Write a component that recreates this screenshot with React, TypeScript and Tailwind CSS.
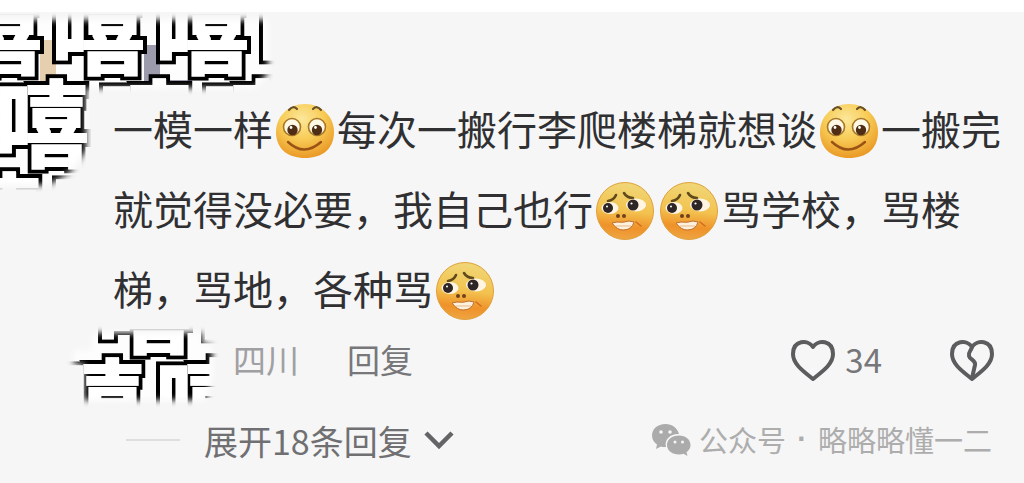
import { useId } from 'react'

const rows = [
  { y: 31, xs: [-5, 98, 202, 305] },
  { y: 124, xs: [42, 145, 248] },
  { y: 217, xs: [-5, 98] },
  { y: 310, xs: [144, 247] },
  { y: 403, xs: [98, 202] },
]

function Stickers() {
  const id = useId()
  const glyphs = rows.flatMap((row) => row.xs.map((x) => ({ x, y: row.y })))

  return (
    <svg
      className="pointer-events-none absolute left-0 top-0 h-[420px] w-[340px] font-['Noto_Sans_CJK_SC',sans-serif] text-[94px] font-bold"
      viewBox="0 0 340 420"
      aria-hidden="true"
    >
      <defs>
        <filter id={`${id}-soft`} x="-20%" y="-20%" width="140%" height="140%">
          <feGaussianBlur stdDeviation="3" />
        </filter>
        {/* white body with a thick square outline round it */}
        <filter id={`${id}-outline`} filterUnits="userSpaceOnUse" x="-80" y="-50" width="460" height="520">
          <feMorphology in="SourceAlpha" operator="dilate" radius="5" result="wide" />
          <feMorphology in="SourceGraphic" operator="dilate" radius="1" result="body" />
          <feMerge>
            <feMergeNode in="wide" />
            <feMergeNode in="body" />
          </feMerge>
        </filter>
        <mask id={`${id}-mask`} maskUnits="userSpaceOnUse" x="0" y="0" width="340" height="420">
          <g fill="white" filter={`url(#${id}-soft)`}>
            <path d="M-20 20H268V72L256 88H86V150L70 172L48 185H-20Z" />
            <path d="M92 333H202V345H212V376L206 400H84V364H74V350H92Z" />
          </g>
        </mask>
      </defs>
      <g mask={`url(#${id}-mask)`}>
        <path d="M0 12H340V100H90V200H0ZM60 325H230V410H60Z" fill="#fdfdfd" />
        <path d="M40 40H56V82H40Z" fill="#e6cfae" />
        <path d="M144 45H160V80H192V90L132 93V84H144Z" fill="#9b9bab" />
        <g filter={`url(#${id}-outline)`} fill="white" textAnchor="middle">
          {glyphs.map((g) => (
            <text key={`${g.x}-${g.y}`} x={g.x} y={g.y + 36}>
              嘻
            </text>
          ))}
        </g>
      </g>
    </svg>
  )
}

function Smile() {
  const id = useId()
  return (
    <svg className="mx-[2px] mb-1 inline-block h-[60px] w-[60px] align-middle" viewBox="0 0 60 60" role="img" aria-label="微笑">
      <defs>
        <radialGradient id={id} cx="45%" cy="28%" r="72%">
          <stop offset="0" stopColor="#fbe79b" />
          <stop offset="0.5" stopColor="#f8cd58" />
          <stop offset="1" stopColor="#ea9a25" />
        </radialGradient>
      </defs>
      <path d="M30 2C47 2 59 15 59 30C59 47 47 56 30 56C13 56 1 47 1 30C1 15 13 2 30 2Z" fill={`url(#${id})`} />
      <path d="M14 8Q18 3 22 7M38 7Q42 3 46 8" fill="none" stroke="#6a5125" strokeWidth="2.2" strokeLinecap="round" />
      <g fill="#fff8e5" stroke="#a77725" strokeWidth="1.6">
        <circle cx="17" cy="25" r="8.5" />
        <circle cx="42" cy="25" r="8.5" />
      </g>
      <g fill="#4f2d14">
        <circle cx="17.5" cy="28" r="5.2" />
        <circle cx="42" cy="28" r="5.2" />
      </g>
      <g fill="#fff">
        <circle cx="16" cy="25.5" r="1.4" />
        <circle cx="40.5" cy="25.5" r="1.4" />
      </g>
      <path d="M13 40Q29 55 46 40" fill="none" stroke="#9a5315" strokeWidth="2.4" strokeLinecap="round" />
    </svg>
  )
}

function Awkward() {
  const id = useId()
  return (
    <svg className="mx-[2px] mb-1 inline-block h-[60px] w-[60px] align-middle" viewBox="0 0 60 60" role="img" aria-label="尴尬">
      <defs>
        <linearGradient id={id} x1="0.55" y1="0" x2="0.45" y2="1">
          <stop offset="0" stopColor="#f0d778" />
          <stop offset="0.5" stopColor="#f3c24f" />
          <stop offset="0.78" stopColor="#ef9229" />
          <stop offset="1" stopColor="#eea544" />
        </linearGradient>
      </defs>
      <circle cx="30" cy="29" r="28.5" fill={`url(#${id})`} stroke="#e0a13c" />
      <path d="M13 19Q19 18 21 13M29 11Q32 16 38 16" fill="none" stroke="#5f4a1b" strokeWidth="2.6" strokeLinecap="round" />
      <g fill="#fff5e2">
        <ellipse cx="15" cy="26" rx="8.5" ry="6" />
        <ellipse cx="41" cy="23" rx="10" ry="6.5" />
      </g>
      <g fill="#2d2526">
        <circle cx="13" cy="26" r="5" />
        <circle cx="38" cy="23" r="5.5" />
      </g>
      <g fill="#fff">
        <circle cx="12" cy="24.5" r="1" />
        <circle cx="36.5" cy="21.5" r="1.1" />
      </g>
      <g fill="#6e4218">
        <circle cx="23" cy="34" r="2" />
        <circle cx="29" cy="34" r="2" />
      </g>
      <path d="M17 41L22 40Q28 41 34 39L39 40Q37 48 28 48Q22 48 17 41Z" fill="#fff0dc" stroke="#c0702f" strokeWidth="1" />
      <path d="M21 44H36" stroke="#dcae7c" strokeWidth="0.8" />
      <path d="M41 40L46 44" stroke="#d06a20" strokeWidth="1.4" strokeLinecap="round" />
    </svg>
  )
}

function Heart({ broken }: { broken?: boolean }) {
  return (
    <svg className="h-11 w-11" viewBox="0 0 44 44" fill="none" stroke="#5c5c5e" strokeWidth="4" strokeLinejoin="round" strokeLinecap="round" aria-hidden="true">
      <path d="M22 9C17 1 2 2 2 16C2 26 12 33 22 41C32 33 42 26 42 16C42 2 27 1 22 9Z" />
      {broken && <path d="M22 9C21 13 18 14 19 18C20 22 26 22 25 27L22 40" />}
    </svg>
  )
}

function WechatIcon() {
  return (
    <svg className="h-8 w-10" viewBox="0 0 40 32" fill="#ababab" aria-hidden="true">
      <path d="M14.5 0C6.5 0 1 5 1 11.5C1 15.5 3 18.5 6 20.5L5 25L10 22.5Q12 23.2 15 23C13 15 20 9.5 28 10C26.5 4 21 0 14.5 0Z" />
      <path d="M28 11.5C21 11.5 16 15.5 16 21C16 26.5 21 30.5 28 30.5Q30.5 30.5 32.5 29.8L36.5 32L35.5 28.2C38 26.5 39.5 24 39.5 21C39.5 15.5 34.5 11.5 28 11.5Z" />
      <g fill="#f6f6f6">
        <circle cx="10" cy="8" r="1.8" />
        <circle cx="19" cy="8" r="1.8" />
        <circle cx="24" cy="18" r="1.5" />
        <circle cx="31.5" cy="18" r="1.5" />
      </g>
    </svg>
  )
}

export default function App() {
  return (
    <div className="relative min-h-screen overflow-hidden bg-white pt-3 font-['Noto_Sans_CJK_SC',sans-serif]">
      <main className="min-h-[calc(100vh-12px)] bg-[#f6f6f6] pt-19">
        <Stickers />
        <p className="pl-[113px] text-[40px] leading-[80px] text-[#303032]">
          一模一样
          <Smile />
          每次一搬行李爬楼梯就想谈
          <Smile />
          一搬完
          <br />
          就觉得没必要，我自己也行
          <Awkward />
          <Awkward />
          骂学校，骂楼
          <br />
          梯，骂地，各种骂
          <Awkward />
        </p>

        <div className="mt-1 flex h-14 items-center justify-between pl-[233px] pr-[30px] text-[33px] text-[#77777a]">
          <div className="flex items-center gap-12">
            <span className="text-[#a0a0a2]">四川</span>
            <button type="button">回复</button>
          </div>
          <div className="flex items-center gap-[68px]">
            <button type="button" className="flex items-center gap-[10px]" aria-label="喜欢 34">
              <Heart />
              <span>34</span>
            </button>
            <button type="button" aria-label="不喜欢">
              <Heart broken />
            </button>
          </div>
        </div>

        <div className="mt-6 flex h-14 items-center justify-between pl-[126px] pr-8">
          <button type="button" className="flex items-center text-[34px] text-[#707073]">
            <span className="mr-6 h-[2px] w-[54px] bg-[#dededf]" />
            展开18条回复
            <svg className="ml-3 h-5 w-[30px]" viewBox="0 0 30 20" fill="none" stroke="#646467" strokeWidth="4.5" aria-hidden="true">
              <path d="M2 3L15 16L28 3" />
            </svg>
          </button>
          <div className="flex items-center text-[29px] text-[#adadad]">
            <WechatIcon />
            <span className="ml-2">公众号</span>
            <span className="w-8 text-center font-['Liberation_Sans',sans-serif] font-bold">·</span>
            <span>略略略懂一二</span>
          </div>
        </div>
      </main>
    </div>
  )
}
